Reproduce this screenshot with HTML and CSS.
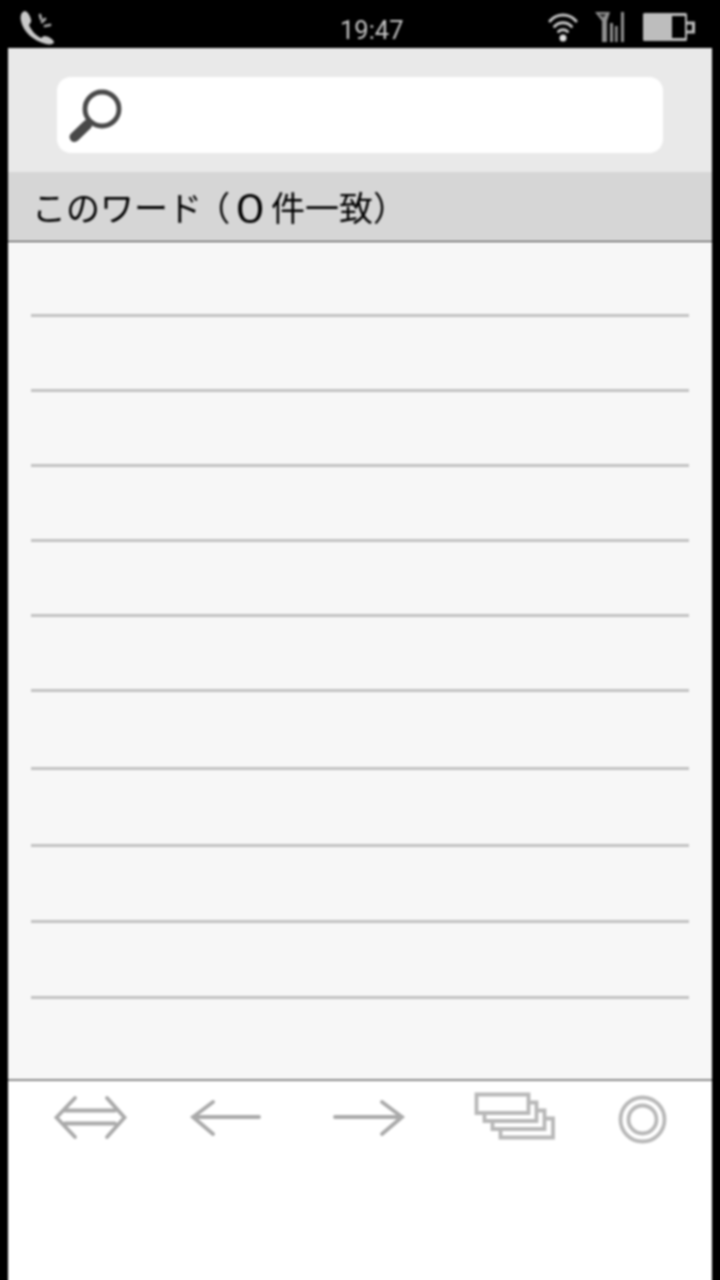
FILE: index.html
```html
<!DOCTYPE html>
<html lang="ja">
<head>
    <meta charset="UTF-8">
    <title>検索</title>
    <link rel="stylesheet" href="styles.css">
</head>
<body>
<div class="status">
    <svg class="ic-call" width="40" height="40" viewBox="18 8 40 40">
        <path d="M25 11C21 12 20 16 21 21C23 31 33 41 46 44C50 45 54 44 54 42C53 39 48 36 44 36L41 38C36 36 31 30 29 25L31 22C32 20 29 12 25 11z" fill="#c9c9c9"/>
        <path d="M40 15l1 4M45 19l-3 3M50 25l-5 1" stroke="#a8a8a8" stroke-width="2.800" stroke-linecap="round" fill="none"/>
    </svg>
    <span class="clock">19:47</span>
    <div class="status-right">
        <svg class="ic-wifi" width="30" height="32" viewBox="0 0 30 32" fill="none" stroke="#c4c4c4" stroke-width="3" stroke-linecap="round">
            <path d="M2 10c7-8 19-8 26 0"/>
            <path d="M6.500 15.500c4.500-5 12.500-5 17 0"/>
            <path d="M10.500 20.500c2.500-2.500 6.500-2.500 9 0"/>
            <circle cx="15" cy="27" r="3.500" fill="#e0e0e0" stroke="none"/>
        </svg>
        <svg width="32" height="32" viewBox="0 0 32 32">
            <path d="M3 1h15l-3 9v21h-5V10z" fill="#8f8f8f"/>
            <path d="M7 3h7l-3 4z" fill="#333"/>
            <path d="M18 12h3v19h-3zM23 15h2.600v16H23zM29 1h3v30h-3z" fill="#8f8f8f"/>
        </svg>
        <svg class="ic-batt" width="54" height="32" viewBox="0 0 54 32">
            <rect x="1" y="2" width="44" height="28" rx="1.500" fill="#bdbdbd"/>
            <rect x="30" y="5" width="13" height="22" fill="#000"/>
            <path d="M45 12h6.500v9H45" fill="none" stroke="#bdbdbd" stroke-width="3"/>
        </svg>
    </div>
</div>
<div class="page">
    <div class="search">
        <div class="search-box">
            <svg width="58" height="58" viewBox="0 0 58 58">
                <circle cx="36" cy="23" r="17" fill="none" stroke="#484848" stroke-width="4.800"/>
                <path d="M21 39L8.500 51" stroke="#484848" stroke-width="10" stroke-linecap="round"/>
            </svg>
        </div>
    </div>
    <div class="head">このワード<span class="paren">（</span><span class="zero">０</span>件一致）</div>
    <div class="list">
        <div class="row"></div>
        <div class="row"></div>
        <div class="row"></div>
        <div class="row"></div>
        <div class="row"></div>
        <div class="row"></div>
        <div class="row row-78"></div>
        <div class="row row-77"></div>
        <div class="row row-76"></div>
        <div class="row row-76"></div>
    </div>
    <div class="tools">
        <svg class="tool" width="76" height="52" viewBox="0 0 76 52">
            <path d="M23 6L4.500 25.500 23 45M55 6l17.500 19.500L55 45M13 18.500h50M13 31.500h50"/>
        </svg>
        <svg class="tool" width="76" height="52" viewBox="0 0 76 52">
            <path d="M23 10L3 25l20 17M3 25h66"/>
        </svg>
        <svg class="tool" width="76" height="52" viewBox="0 0 76 52">
            <path d="M50 10l20 15-20 17M70 25H3"/>
        </svg>
        <svg class="tool" width="84" height="52" viewBox="0 0 84 52">
            <path d="M4.500 2.500h52V21h-52zM56.500 10.500h8V29h-52v-8M64.500 18.500h8V37h-52v-8M72.500 26.500H81V45.500H28.500v-8.500"/>
        </svg>
        <svg class="tool" width="52" height="52" viewBox="0 0 52 52">
            <circle cx="26.500" cy="25.500" r="22"/>
            <circle cx="26.500" cy="25.500" r="14"/>
        </svg>
    </div>
</div>
</body>
</html>
```
FILE: styles.css
```css
* {margin:0; padding:0; box-sizing:border-box;}

html, body {width:720px; height:1280px; background:#000; overflow:hidden;}
body {font-family:"Noto Sans CJK JP", "Liberation Sans", sans-serif;}

/* the shot is a soft upscale, so everything gets a slight blur */
.status, .page {filter:blur(.8px);}

.status {height:48px; display:flex; align-items:center; position:relative; padding:0 24px 0 18px;}
.ic-call {margin-top:8px;}
.clock {position:absolute; left:340px; top:12px; font:25.500px/36px "Roboto", sans-serif; color:#c4c4c4;}
.status-right {margin-left:auto; display:flex; align-items:center; gap:15px; margin-top:6px;}
.ic-wifi {margin-right:-1px;}
.ic-batt {margin-left:3px;}

/* runs past the bottom edge so the blur doesn't darken the last rows */
.page {margin:0 8px; height:1240px; background:#fff; display:flex; flex-direction:column;}

.search {height:124px; background:#e9e9e9; padding:29px 49px 0 49px;}
.search-box {height:76px; background:#fff; border-radius:14px; display:flex; align-items:center; padding-left:9px;}

.head {height:70px; background:#d6d6d6; border-bottom:1px solid #333; padding-left:24px; font-size:34px; line-height:69px; color:#000; white-space:nowrap;}
.paren {font-feature-settings:"palt"; margin-left:10px; margin-right:4px;}
.zero {display:inline-block; transform:scale(1.3,1.15); margin-right:4px;}

.list {height:839px; background:#f7f7f7; border-bottom:2px solid #8a8a8a; padding:0 23px;}
.row {height:75px; border-bottom:3px solid #c2c2c2;}
.row-78 {height:78px;}
.row-77 {height:77px;}
.row-76 {height:76px;}

.tools {display:flex; align-items:flex-start; padding-top:11px;}
.tool {fill:none; stroke:#aaa; stroke-width:3.800; stroke-linecap:round; flex:none;}
.tool:nth-child(1) {margin-left:44px;}
.tool:nth-child(2) {margin-left:62px;}
.tool:nth-child(3) {margin-left:66px;}
.tool:nth-child(4) {margin-left:64px; stroke:#b8b8b8; stroke-linecap:butt;}
.tool:nth-child(5) {margin-left:60px; margin-top:2px; stroke:#b8b8b8;}
```
